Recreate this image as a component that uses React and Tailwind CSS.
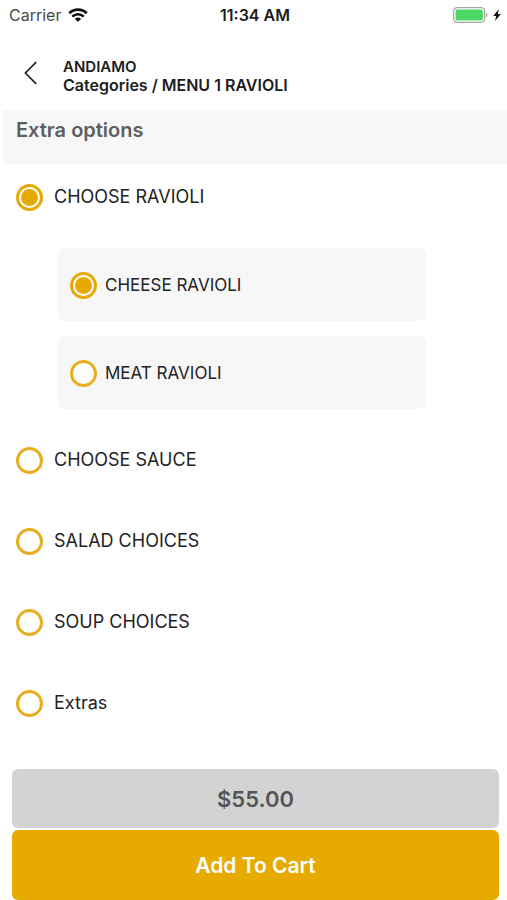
import { useState } from "react";

const CATEGORIES = [
  { id: "ravioli", label: "CHOOSE RAVIOLI", options: ["CHEESE RAVIOLI", "MEAT RAVIOLI"] },
  { id: "sauce", label: "CHOOSE SAUCE", options: [] },
  { id: "salad", label: "SALAD CHOICES", options: [] },
  { id: "soup", label: "SOUP CHOICES", options: [] },
  { id: "extras", label: "Extras", options: [] },
];

function StatusBar() {
  return (
    <div className="grid h-[30px] grid-cols-[1fr_auto_1fr] items-center pr-[6px] pl-[9px]">
      <div className="flex items-center gap-[7px]">
        <span className="text-[16px] leading-5 text-[#4a4a4a]">Carrier</span>
        <svg width="20" height="14" viewBox="0 0 20 14" fill="none" stroke="#111" aria-hidden="true">
          <path d="M1.3 5.2a12.4 12.4 0 0 1 17.4 0" strokeWidth="2.8" />
          <path d="M4.3 8.6a8.2 8.2 0 0 1 11.4 0" strokeWidth="2.6" />
          <path d="M10 13.8 6.8 10.9a4.6 4.6 0 0 1 6.4 0Z" fill="#111" stroke="none" />
        </svg>
      </div>
      <span className="text-[16px] leading-5 font-semibold">11:34 AM</span>
      <div className="flex items-center justify-end gap-1">
        <svg width="36" height="16" viewBox="0 0 36 16" fill="none" aria-hidden="true">
          <rect x="0.7" y="0.7" width="31" height="14.6" rx="3.6" stroke="#a5a5a5" strokeWidth="1.2" />
          <rect x="2.6" y="2.6" width="27.2" height="10.8" rx="1.6" fill="#4bd763" />
          <path d="M33.2 5.6c1.7.7 1.7 4.1 0 4.8Z" fill="#a5a5a5" />
        </svg>
        <svg width="8" height="12" viewBox="0 0 8 12" fill="#111" aria-hidden="true">
          <path d="M5.9 0 .2 6.9h3L2 12l5.9-7.1H4.8Z" />
        </svg>
      </div>
    </div>
  );
}

function RadioRow({ name, label, checked, onSelect }) {
  return (
    <label className="flex min-w-0 flex-1 cursor-pointer items-center">
      <input
        type="radio"
        name={name}
        checked={checked}
        onChange={onSelect}
        className="grid size-[27px] shrink-0 cursor-pointer appearance-none place-items-center rounded-full border-[3px] border-[#e7ae20] bg-white before:size-[17px] before:rounded-full before:bg-transparent checked:border-[#e7aa00] checked:before:bg-[#e7aa00]"
      />
      <span>{label}</span>
    </label>
  );
}

export default function App() {
  const [category, setCategory] = useState("ravioli");
  const [choice, setChoice] = useState("CHEESE RAVIOLI");

  return (
    <div className="flex min-h-screen flex-col bg-white font-[Inter,'Liberation_Sans',sans-serif] text-[#1c1c1c]">
      <StatusBar />

      <header className="flex h-20 items-end pb-[15px] pl-6">
        <button type="button" aria-label="Back" className="flex h-11 w-[39px] items-center">
          <svg width="14" height="24" viewBox="0 0 14 24" fill="none" stroke="#222" strokeWidth="1.7" aria-hidden="true">
            <path d="M12.2 1.2 1.4 12l10.8 10.8" />
          </svg>
        </button>
        <div className="font-semibold">
          <p className="text-[15px] leading-[19px]">ANDIAMO</p>
          <h1 className="text-[16px] leading-[19px]">Categories / MENU 1 RAVIOLI</h1>
        </div>
      </header>

      <main className="flex-1">
        <h2 className="ml-[3px] h-[54px] bg-[#f7f7f7] pt-[6px] pl-[13px] text-[20px] leading-7 font-semibold text-[#5c5e60]">
          Extra options
        </h2>
        <div className="flex flex-col gap-[15px] text-[#222]">
          {CATEGORIES.map((c) => (
            <section key={c.id}>
              <div className="flex h-[66px] pl-4 text-[18px] leading-6 [&_label]:gap-[11px]">
                <RadioRow
                  name="category"
                  label={c.label}
                  checked={category === c.id}
                  onSelect={() => setCategory(c.id)}
                />
              </div>
              {category === c.id && c.options.length > 0 && (
                <div className="mt-[18px] mr-[81px] mb-[3px] ml-[58px] flex flex-col gap-[15px]">
                  {c.options.map((o) => (
                    <div
                      key={o}
                      className="flex h-[73px] rounded-[7px] bg-[#f7f7f7] pt-[2px] pl-3 text-[17px] leading-6 [&_label]:gap-2 [&_span]:pb-[2px]"
                    >
                      <RadioRow name="ravioli" label={o} checked={choice === o} onSelect={() => setChoice(o)} />
                    </div>
                  ))}
                </div>
              )}
            </section>
          ))}
        </div>
      </main>

      <footer className="flex flex-col gap-[2px] pr-2 pl-3">
        <p className="flex h-[59px] items-center justify-center rounded-[6px] bg-[#d3d3d3] text-[22px] leading-7 font-semibold text-[#555]">
          $55.00
        </p>
        <button
          type="button"
          className="h-[70px] rounded-[6px] bg-[#e7aa00] pt-[2px] text-[21px] leading-7 font-semibold text-white"
        >
          Add To Cart
        </button>
      </footer>
    </div>
  );
}
